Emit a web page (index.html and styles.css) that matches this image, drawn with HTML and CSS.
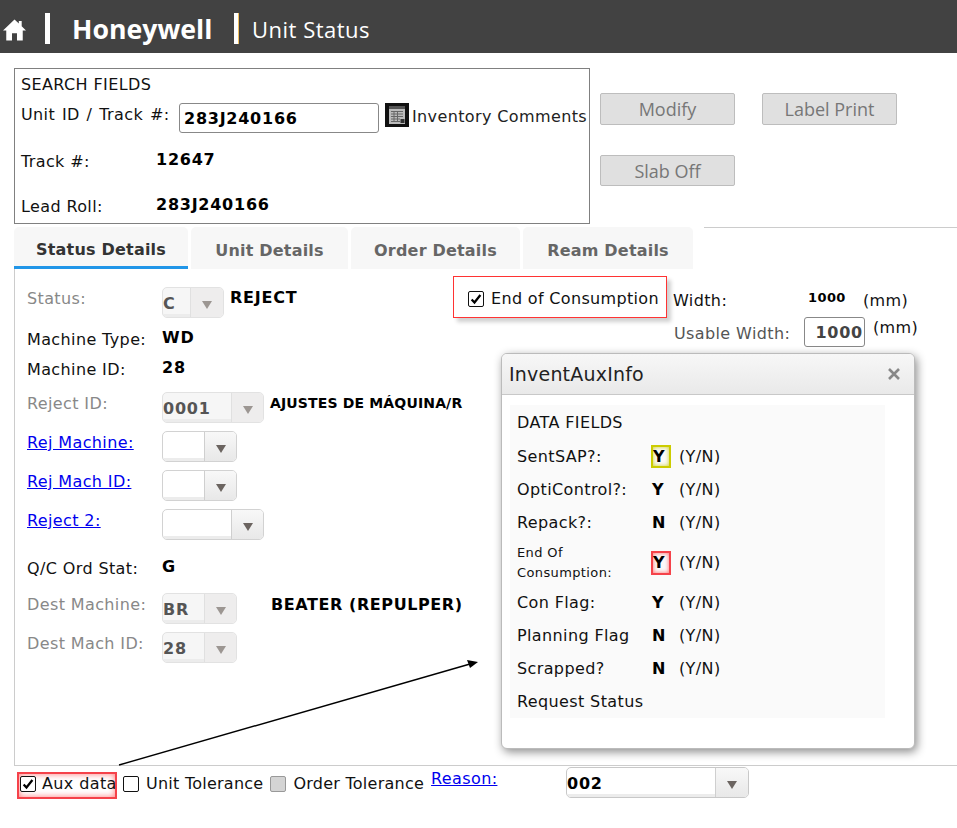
FILE: index.html
```html
<!DOCTYPE html>
<html lang="en">
<head>
<meta charset="utf-8">
<title>Unit Status</title>
<link rel="stylesheet" href="styles.css">
</head>
<body>
<div class="page">
  <header class="topbar">
    <svg class="home" viewBox="0 0 24 22" aria-hidden="true"><path d="M12 0 L16.5 4.3 L16.5 1.5 L19.5 1.5 L19.5 7.2 L24 11.5 L20.6 11.5 L20.6 22 L14.6 22 L14.6 14.5 L9.4 14.5 L9.4 22 L3.4 22 L3.4 11.5 L0 11.5 Z" fill="#fff"/></svg>
    <span class="bar bar-a"></span>
    <span class="brand">Honeywell</span>
    <span class="bar bar-b"></span>
    <span class="title">Unit Status</span>
  </header>

  <section class="top">
    <div class="search">
      <div class="search-title">SEARCH FIELDS</div>
      <div class="search-unit">
        <span class="unit-label">Unit ID / Track #:</span>
        <span class="unit-input">283J240166</span>
        <svg class="note-icon" viewBox="0 0 24 24" aria-hidden="true">
          <rect width="24" height="24" fill="#111"/>
          <rect x="4" y="3" width="16" height="18" fill="#bbb"/>
          <rect x="4" y="3" width="16" height="3" fill="#555"/>
          <path d="M6 8.5H18M6 11H18M6 13.5H18M6 16H15M6 18.5H15M9 8V19M12.5 8V19" stroke="#666" stroke-width="1" fill="none"/>
          <rect x="15.5" y="16" width="4" height="4" fill="#333"/>
        </svg>
        <span class="comments">Inventory Comments</span>
      </div>
      <div class="search-line line-track"><span class="search-label">Track #:</span><b class="search-value">12647</b></div>
      <div class="search-line line-lead"><span class="search-label">Lead Roll:</span><b class="search-value">283J240166</b></div>
    </div>
    <div class="actions">
      <button class="btn btn-tall" type="button">Modify</button>
      <button class="btn btn-tall" type="button">Label Print</button>
      <button class="btn" type="button">Slab Off</button>
    </div>
  </section>

  <nav class="tabs">
    <span class="tab tab-1 active">Status Details</span>
    <span class="tab tab-2">Unit Details</span>
    <span class="tab tab-3">Order Details</span>
    <span class="tab tab-4">Ream Details</span>
    <span class="tabs-rule"></span>
  </nav>

  <section class="panel">
    <div class="fields">
      <div class="row row-41">
        <span class="label muted">Status:</span>
        <div class="dd dd-62 off"><span class="dd-val">C</span><span class="dd-btn"><i class="tri"></i></span></div>
        <b class="after after-status">REJECT</b>
      </div>
      <div class="row row-30">
        <span class="label">Machine Type:</span><b class="value">WD</b>
      </div>
      <div class="row row-34">
        <span class="label">Machine ID:</span><b class="value">28</b>
      </div>
      <div class="row">
        <span class="label muted">Reject ID:</span>
        <div class="dd dd-102 off"><span class="dd-val">0001</span><span class="dd-btn"><i class="tri"></i></span></div>
        <b class="after after-small">AJUSTES DE MÁQUINA/R</b>
      </div>
      <div class="row">
        <a class="label link" href="#">Rej Machine:</a>
        <div class="dd dd-75"><span class="dd-val"></span><span class="dd-btn"><i class="tri"></i></span></div>
      </div>
      <div class="row">
        <a class="label link" href="#">Rej Mach ID:</a>
        <div class="dd dd-75"><span class="dd-val"></span><span class="dd-btn"><i class="tri"></i></span></div>
      </div>
      <div class="row row-48">
        <a class="label link" href="#">Reject 2:</a>
        <div class="dd dd-102"><span class="dd-val"></span><span class="dd-btn"><i class="tri"></i></span></div>
      </div>
      <div class="row row-36">
        <span class="label">Q/C Ord Stat:</span><b class="value">G</b>
      </div>
      <div class="row">
        <span class="label muted">Dest Machine:</span>
        <div class="dd dd-75 off"><span class="dd-val">BR</span><span class="dd-btn"><i class="tri"></i></span></div>
        <b class="after after-beater">BEATER (REPULPER)</b>
      </div>
      <div class="row">
        <span class="label muted">Dest Mach ID:</span>
        <div class="dd dd-75 off"><span class="dd-val">28</span><span class="dd-btn"><i class="tri"></i></span></div>
      </div>
    </div>

    <div class="eoc">
      <span class="check on"><svg viewBox="0 0 16 16" aria-hidden="true"><path d="M3 8.5 L6.3 12 L13 3.5" fill="none" stroke="#000" stroke-width="2.6"/></svg></span>
      <span class="eoc-text">End of Consumption</span>
    </div>

    <div class="widths">
      <div class="width-1"><span class="w-label">Width:</span><b class="w-value">1000</b><span>(mm)</span></div>
      <div class="width-2"><span class="u-label">Usable Width:</span><span class="u-input">1000</span><span class="u-unit">(mm)</span></div>
    </div>
  </section>

  <footer class="bottom">
    <div class="aux">
      <span class="check on"><svg viewBox="0 0 16 16" aria-hidden="true"><path d="M3 8.5 L6.3 12 L13 3.5" fill="none" stroke="#000" stroke-width="2.6"/></svg></span>
      <span>Aux data</span>
    </div>
    <span class="check check-unit"></span><span class="opt">Unit Tolerance</span>
    <span class="check check-order off"></span><span class="opt">Order Tolerance</span>
    <a class="reason" href="#">Reason:</a>
    <div class="dd dd-183"><span class="dd-val">002</span><span class="dd-btn"><i class="tri"></i></span></div>
  </footer>

  <svg class="arrow" viewBox="0 0 957 828" aria-hidden="true">
    <line x1="119" y1="765" x2="470" y2="664" stroke="#000" stroke-width="1.4"/>
    <polygon points="478,662 467,660 470,668" fill="#000"/>
  </svg>

  <aside class="modal">
    <div class="modal-head"><span>InventAuxInfo</span>
      <svg class="close" viewBox="0 0 14 14" aria-hidden="true"><path d="M2 2L12 12M12 2L2 12" stroke="#888" stroke-width="2.6" fill="none"/></svg>
    </div>
    <div class="modal-body">
      <div class="data">
        <div class="d-row d-first"><span class="d-label">DATA FIELDS</span></div>
        <div class="d-row"><span class="d-label">SentSAP?:</span><b class="d-val hl-yellow">Y</b><span>(Y/N)</span></div>
        <div class="d-row"><span class="d-label">OptiControl?:</span><b class="d-val">Y</b><span>(Y/N)</span></div>
        <div class="d-row"><span class="d-label">Repack?:</span><b class="d-val">N</b><span>(Y/N)</span></div>
        <div class="d-row d-tall"><span class="d-label d-small">End Of<br>Consumption:</span><b class="d-val hl-red">Y</b><span>(Y/N)</span></div>
        <div class="d-row"><span class="d-label">Con Flag:</span><b class="d-val">Y</b><span>(Y/N)</span></div>
        <div class="d-row"><span class="d-label">Planning Flag</span><b class="d-val">N</b><span>(Y/N)</span></div>
        <div class="d-row"><span class="d-label">Scrapped?</span><b class="d-val">N</b><span>(Y/N)</span></div>
        <div class="d-row"><span class="d-label">Request Status</span></div>
      </div>
    </div>
  </aside>
</div>
</body>
</html>
```

FILE: styles.css
```css
* { box-sizing: border-box; }
html, body { margin: 0; padding: 0; background: #fff; }
body { font-family: "DejaVu Sans", Verdana, sans-serif; font-size: 16px; color: #111; letter-spacing: .38px; }
b, .dd-val, .unit-input, .u-input { letter-spacing: .75px; }
.page { position: relative; width: 957px; height: 828px; overflow: hidden; }

/* header */
.topbar { height: 53px; background: #424242; color: #fff; display: flex; align-items: center; letter-spacing: 0; }
.home { width: 23px; height: 22px; margin: 7px 0 0 3px; flex: none; }
.bar { width: 5px; height: 31px; background: #fff; flex: none; margin-top: 4px; }
.bar-a { margin-left: 19px; }
.bar-b { margin-left: 22px; border-right: 1px solid #f0c060; }
.brand { font-family: "Open Sans", sans-serif; font-weight: 700; font-size: 26.7px; margin-left: 22px; margin-top: 4px; width: 140px; white-space: nowrap; }
.title { font-family: "Open Sans", sans-serif; font-size: 22px; letter-spacing: .5px; margin-left: 13px; margin-top: 4px; white-space: nowrap; }

/* search */
.top { display: flex; padding: 15px 0 0 14px; }
.search { width: 576px; height: 156px; border: 1px solid #808080; padding: 5px 0 0 6px; }
.search-title { height: 21px; line-height: 21px; }
.search-unit { display: flex; align-items: flex-start; margin-top: 8px; height: 30px; }
.unit-label { width: 158px; line-height: 20px; margin-top: 2px; white-space: nowrap; word-spacing: 1.4px; }
.unit-input { width: 200px; height: 30px; border: 1px solid #888; border-radius: 3px; font-weight: 700; color: #000; padding: 5px 0 0 4px; line-height: 20px; }
.note-icon { width: 24px; height: 24px; margin-left: 6px; flex: none; }
.comments { margin-left: 3px; line-height: 28px; white-space: nowrap; color: #222; }
.search-line { display: flex; align-items: flex-start; }
.search-label { width: 135px; line-height: 20px; margin-top: 2px; }
.search-value { font-weight: 700; color: #000; line-height: 20px; }
.line-track { margin-top: 17px; height: 45px; }
.line-lead { height: 24px; }

.actions { display: grid; grid-template-columns: 135px 135px; column-gap: 27px; row-gap: 30px; align-content: start; margin: 25px 0 0 10px; }
.btn { height: 31px; background: #e0e0e0; border: 1px solid #bdbdbd; border-radius: 2px; color: #777; font-family: "Open Sans", sans-serif; font-size: 18px; letter-spacing: 0; padding: 0; }
.btn-tall { height: 32px; }

/* tabs */
.tabs { display: flex; margin: 3px 0 0 14px; height: 42px; }
.tab { height: 42px; background: #f7f7f7; border-radius: 5px 5px 0 0; font-weight: 700; color: #666; display: flex; align-items: center; justify-content: center; margin-right: 3px; padding-top: 4px; white-space: nowrap; font-size: 16px; letter-spacing: .2px; flex: none; }
.tab-1 { width: 174px; }
.tab-2 { width: 157px; }
.tab-3 { width: 169px; }
.tab-4 { width: 170px; margin-right: 0; }
.tab.active { color: #333; border-bottom: 3px solid #2196e8; padding-top: 5px; }
.tabs-rule { flex: 1; height: 1px; background: #ccc; margin-left: 11px; }

/* panel */
.panel { height: 497px; margin-left: 14px; border-left: 1px solid #ccc; border-bottom: 1px solid #ccc; display: flex; align-items: flex-start; }
.fields { width: 438px; padding: 18px 0 0 12px; flex: none; }
.row { display: flex; align-items: flex-start; height: 39px; }
.row-41 { height: 41px; }
.row-30 { height: 30px; }
.row-34 { height: 34px; }
.row-48 { height: 48px; }
.row-36 { height: 36px; }
.label { width: 135px; line-height: 24px; flex: none; white-space: nowrap; color: #111; }
.muted { color: #888; }
.link { color: #00e; text-decoration: underline; }
.value { line-height: 20px; color: #000; }
.after { color: #000; line-height: 20px; white-space: nowrap; }
.after-status { margin-left: 6px; margin-top: 1px; }
.after-small { margin-left: 6px; font-size: 14px; line-height: 22px; letter-spacing: .15px; }
.after-beater { margin-left: 34px; margin-top: 2px; letter-spacing: .58px; }

.dd { display: flex; height: 31px; border: 1px solid #d2d2d2; border-radius: 5px; background: #fff; flex: none; overflow: hidden; }
.dd-62 { width: 62px; }
.dd-75 { width: 75px; }
.dd-102 { width: 102px; }
.dd-183 { width: 183px; margin-top: 1px; border-color: #c8c8c8; }
.dd-val { flex: 1; font-weight: 700; color: #000; line-height: 31px; border-bottom: 3px solid #ececec; height: 29px; white-space: nowrap; }
.dd-btn { width: 32px; flex: none; border-left: 1px solid #cfcfcf; background: linear-gradient(#f8f8f8, #e8e8e8); display: flex; align-items: center; justify-content: center; padding-top: 5px; }
.dd-62 .dd-btn, .dd-183 .dd-btn { width: 33px; }
.tri { width: 0; height: 0; border-left: 5px solid transparent; border-right: 5px solid transparent; border-top: 8px solid #6b6460; }
.dd.off { border-color: #e2e2e2; background: #f6f6f6; }
.dd.off .dd-val { color: #555; }
.dd.off .dd-btn { background: #eeeded; border-left-color: #e0e0e0; }
.dd.off .tri { border-top-color: #9c9692; }

.eoc { width: 214px; height: 42px; margin-top: 7px; border: 1px solid #f33; box-shadow: 4px 4px 4px #d0d0d0; display: flex; align-items: center; padding: 4px 0 0 14px; flex: none; white-space: nowrap; gap: 7px; }
.eoc-text { margin-top: -2px; letter-spacing: .33px; }

.check { width: 16px; height: 16px; border: 1px solid #111; border-radius: 2px; display: block; flex: none; background: #fff; }
.check svg { display: block; width: 14px; height: 14px; }
.check.off { background: #d4d4d4; border-color: #999; }

.widths { margin: 20px 0 0 6px; flex: none; }
.width-1 { display: flex; height: 28px; line-height: 24px; }
.w-label { width: 135px; }
.w-value { font-size: 13px; line-height: 18px; width: 55px; color: #000; letter-spacing: .4px; }
.width-2 { display: flex; align-items: flex-start; }
.u-label { color: #555; width: 130px; margin-left: 1px; line-height: 34px; white-space: nowrap; }
.u-input { width: 61px; height: 30px; border: 1px solid #888; border-radius: 3px; font-weight: 700; color: #444; text-align: right; padding: 5px 1px 0 0; line-height: 20px; }
.u-unit { margin-left: 8px; line-height: 22px; }

/* bottom */
.bottom { display: flex; align-items: flex-start; padding-left: 17px; }
.aux { width: 100px; height: 27px; margin-top: 6px; border: 2px solid #f5424a; box-shadow: inset 0 0 6px #f77; display: flex; align-items: center; padding: 0 0 4px 1px; gap: 6px; white-space: nowrap; overflow: hidden; }
.check-unit { margin: 10px 0 0 6px; }
.check-order { margin: 10px 0 0 7px; }
.opt { margin: 7px 0 0 7px; line-height: 22px; white-space: nowrap; letter-spacing: .25px; }
.reason { color: #00e; line-height: 22px; width: 135px; margin: 2px 0 0 7px; flex: none; }

/* overlays */
.arrow { position: absolute; left: 0; top: 0; width: 957px; height: 828px; pointer-events: none; }
.modal { position: absolute; left: 501px; top: 353px; width: 414px; height: 396px; background: #fff; border: 1px solid #bbb; border-radius: 6px; box-shadow: 2px 3px 10px rgba(0,0,0,.45); overflow: hidden; }
.modal-head { height: 41px; background: linear-gradient(#f7f7f7, #e9e9e9); border-bottom: 1px solid #c8c8c8; display: flex; align-items: center; justify-content: space-between; padding: 0 13px 0 7px; font-size: 19px; letter-spacing: .2px; color: #222; }
.close { width: 14px; height: 14px; }
.modal-body { padding: 10px 0 0 8px; }
.data { width: 375px; height: 313px; background: #fafafa; padding: 1px 0 0 7px; }
.d-row { display: flex; align-items: center; height: 33px; white-space: nowrap; }
.d-first { height: 34px; padding-bottom: 1px; }
.d-tall { height: 47px; }
.d-label { width: 134px; flex: none; }
.d-small { font-size: 13px; line-height: 20px; margin-top: 1px; }
.d-val { width: 20px; height: 23px; margin-right: 8px; flex: none; font-weight: 700; color: #000; display: flex; align-items: center; padding-left: 1px; letter-spacing: 0; }
.hl-yellow { border: 2px solid #cccc00; box-shadow: inset 0 0 4px #cccc22; padding-left: 0; }
.hl-red { border: 2px solid #f5424a; box-shadow: inset 0 0 4px #f66; height: 24px; padding-left: 0; }
```
